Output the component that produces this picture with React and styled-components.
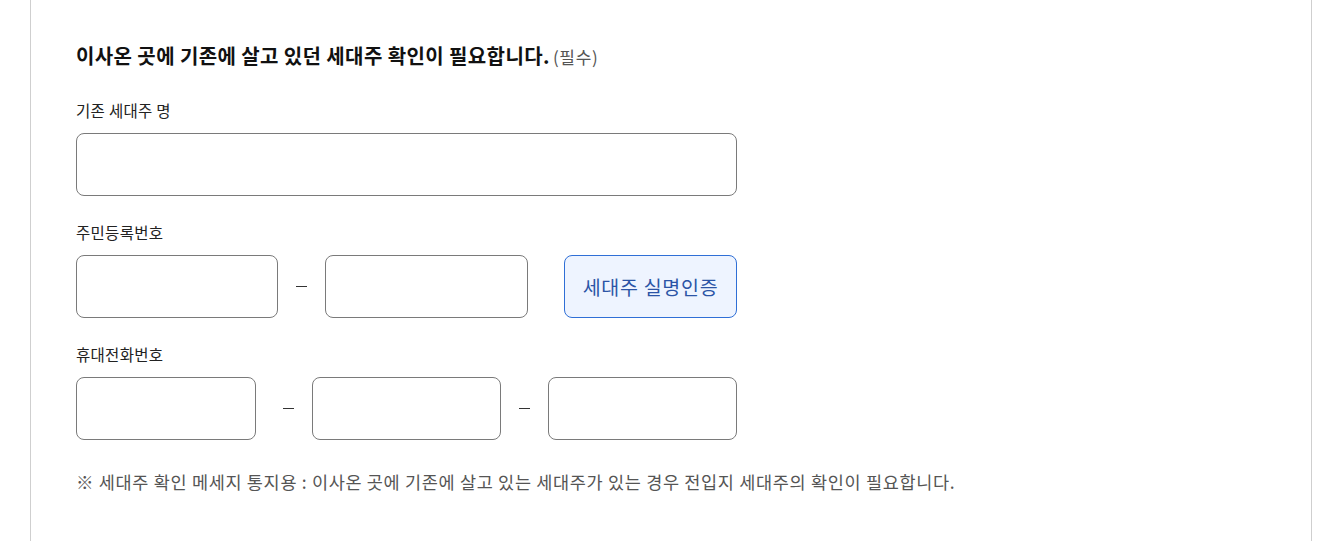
import React from "react";
import styled, { createGlobalStyle } from "styled-components";

const Global = createGlobalStyle`
  html, body { margin: 0; padding: 0; background: #fff; }
  body { font-family: "Noto Sans CJK KR", "Noto Sans", sans-serif; color: #222; }
  * { box-sizing: border-box; }
`;

const Page = styled.div`
  height: 541px;
  overflow: hidden;
  padding: 0 28px 0 30px;
`;

const Panel = styled.section`
  min-height: 600px;
  border-left: 1px solid #cfcfcf;
  border-right: 1px solid #cfcfcf;
  padding: 43px 45px 0 45px;
  display: flex;
  flex-direction: column;
`;

const Title = styled.h2`
  margin: 0;
  font-size: 20px;
  line-height: 26px;
  font-weight: 700;
  color: #111;
  letter-spacing: 0.4px;
`;

const Required = styled.span`
  font-size: 17px;
  line-height: 1;
  font-weight: 400;
  color: #555;
  margin-left: 3px;
  letter-spacing: 0.7px;
`;

const Form = styled.div`
  width: 661px;
  display: flex;
  flex-direction: column;
  gap: 25px;
  margin-top: 30px;
`;

const Field = styled.div`
  display: flex;
  flex-direction: column;
  gap: 12px;
`;

const Label = styled.label`
  font-size: 15.5px;
  line-height: 22px;
  color: #222;
  letter-spacing: 0.3px;
`;

const Row = styled.div`
  display: flex;
  align-items: center;
`;

const Input = styled.input`
  width: ${(p) => p.$w || "100%"};
  height: 63px;
  flex: none;
  border: 1px solid #7a7a7a;
  border-radius: 8px;
  background: #fff;
  padding: 0 14px;
  font-family: inherit;
  font-size: 16px;
  outline: none;
`;

const Dash = styled.span`
  width: ${(p) => p.$w}px;
  flex: none;
  display: flex;
  justify-content: center;
  padding-left: ${(p) => p.$shift || 0}px;
  &::before {
    content: "";
    width: 11px;
    height: 1px;
    background: #333;
  }
`;

const AuthButton = styled.button`
  margin-left: auto;
  width: 173px;
  height: 63px;
  border: 1px solid #2f6fd6;
  border-radius: 8px;
  background: #eef4ff;
  color: #2b54a6;
  font-family: inherit;
  font-size: 19.5px;
  letter-spacing: 0.7px;
  cursor: pointer;
`;

const Note = styled.p`
  margin: 30px 0 0;
  font-size: 17.5px;
  line-height: 24px;
  color: #555;
  letter-spacing: 0.68px;
  white-space: nowrap;
`;

export default function App() {
  return (
    <>
      <Global />
      <Page>
        <Panel>
          <Title>
            이사온 곳에 기존에 살고 있던 세대주 확인이 필요합니다.
            <Required>(필수)</Required>
          </Title>
          <Form>
            <Field>
              <Label>기존 세대주 명</Label>
              <Input type="text" />
            </Field>
            <Field>
              <Label>주민등록번호</Label>
              <Row>
                <Input $w="202px" type="text" />
                <Dash $w={47} />
                <Input $w="203px" type="password" />
                <AuthButton type="button">세대주 실명인증</AuthButton>
              </Row>
            </Field>
            <Field>
              <Label>휴대전화번호</Label>
              <Row>
                <Input $w="180px" type="text" />
                <Dash $w={56} $shift={9} />
                <Input $w="189px" type="text" />
                <Dash $w={47} />
                <Input $w="189px" type="text" />
              </Row>
            </Field>
          </Form>
          <Note>
            ※ 세대주 확인 메세지 통지용 : 이사온 곳에 기존에 살고 있는 세대주가 있는 경우 전입지 세대주의 확인이 필요합니다.
          </Note>
        </Panel>
      </Page>
    </>
  );
}
